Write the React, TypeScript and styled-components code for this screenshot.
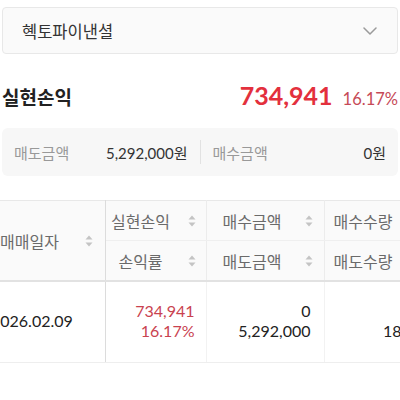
import styled, { createGlobalStyle } from 'styled-components'

const GlobalStyle = createGlobalStyle`
  html, body {
    margin: 0;
    padding: 0;
    background: #fff;
  }
  body {
    font-family: Lato, "Noto Sans CJK KR", sans-serif;
    color: #222;
  }
`

const Page = styled.div`
  width: 400px;
  padding: 7px 2px 0;
  box-sizing: border-box;
  overflow: hidden;
`

const Select = styled.div`
  display: flex;
  align-items: center;
  justify-content: space-between;
  height: 47px;
  box-sizing: border-box;
  padding: 0 20px 0 19px;
  background: #fafafa;
  border: 1px solid #e8e8e8;
  border-radius: 4px;
  font-size: 16.5px;
  color: #333;
`

const TitleRow = styled.div`
  display: flex;
  align-items: baseline;
  justify-content: space-between;
  margin-top: 26px;
  height: 36px;
`

const Title = styled.div`
  font-size: 19px;
  font-weight: 700;
  color: #222;
`

const Profit = styled.div`
  display: flex;
  align-items: baseline;
  gap: 10px;
`

const ProfitValue = styled.span`
  font-size: 25px;
  font-weight: 700;
  color: #e3303d;
`

const ProfitRate = styled.span`
  font-size: 16.5px;
  color: #c64a57;
`

const Summary = styled.div`
  display: flex;
  align-items: center;
  margin-top: 12px;
  height: 48px;
  background: #f7f7f7;
  border-radius: 6px;
`

const SummaryItem = styled.div`
  flex: 1;
  display: flex;
  justify-content: space-between;
  align-items: center;
  padding: 0 12px;
  font-size: 15px;
`

const SummaryLabel = styled.span`
  color: #999;
`

const SummaryValue = styled.span`
  color: #333;
`

const Divider = styled.div`
  width: 1px;
  height: 24px;
  background: #e2e2e2;
`

const TableWrap = styled.div`
  margin: 24px -2px 0;
  overflow: hidden;
`

const Table = styled.table`
  margin-left: -16px;
  border-collapse: collapse;
  table-layout: fixed;
  width: 440px;
`

const Th = styled.th<{ $first?: boolean; $bottom?: boolean }>`
  height: 39px;
  padding: 0;
  background: #fafafa;
  font-weight: 400;
  font-size: 16px;
  color: #6a6a6a;
  border-top: 1px solid #e8e8e8;
  border-right: 1px solid ${(p) => (p.$first ? '#dcdcdc' : '#ececec')};
  border-bottom: ${(p) => (p.$bottom ? '2px solid #e2e2e2' : '1px solid #efefef')};
`

const HeadInner = styled.div<{ $pl: number; $pr: number; $gap: number; $center?: boolean }>`
  display: flex;
  align-items: center;
  gap: ${(p) => p.$gap}px;
  padding: 0 ${(p) => p.$pr}px 0 ${(p) => p.$pl}px;

  span {
    flex: 1;
    text-align: ${(p) => (p.$center ? 'center' : 'left')};
    white-space: nowrap;
  }
`

const Td = styled.td<{ $first?: boolean; $align?: string; $pl?: number; $pr?: number; $red?: boolean }>`
  height: 78px;
  padding: 0 ${(p) => p.$pr ?? 0}px 2px ${(p) => p.$pl ?? 0}px;
  font-size: 16px;
  line-height: 20px;
  color: ${(p) => (p.$red ? '#c9424f' : '#222')};
  text-align: ${(p) => p.$align ?? 'left'};
  border-right: 1px solid ${(p) => (p.$first ? '#dcdcdc' : '#f2f2f2')};
  border-bottom: 1px solid #eeeeee;
  white-space: nowrap;
`

const Chevron = () => (
  <svg width="14" height="8" viewBox="0 0 14 8" fill="none">
    <path d="M1 1l6 6 6-6" stroke="#9a9a9a" strokeWidth="1.5" strokeLinecap="round" strokeLinejoin="round" />
  </svg>
)

const SortIcon = () => (
  <svg width="8" height="12" viewBox="0 0 8 12">
    <path d="M4 0.5L7.5 4.5H0.5Z" fill="#c4c4c4" />
    <path d="M4 11.5L7.5 7.5H0.5Z" fill="#c4c4c4" />
  </svg>
)

const HeadCell = ({
  label,
  pl,
  pr,
  gap,
  center,
  icon = true,
}: {
  label: string
  pl: number
  pr: number
  gap: number
  center?: boolean
  icon?: boolean
}) => (
  <HeadInner $pl={pl} $pr={pr} $gap={gap} $center={center}>
    <span>{label}</span>
    {icon && <SortIcon />}
  </HeadInner>
)

export default function App() {
  return (
    <>
      <GlobalStyle />
      <Page>
        <Select>
          <span>혝토파이낸셜</span>
          <Chevron />
        </Select>

        <TitleRow>
          <Title>실현손익</Title>
          <Profit>
            <ProfitValue>734,941</ProfitValue>
            <ProfitRate>16.17%</ProfitRate>
          </Profit>
        </TitleRow>

        <Summary>
          <SummaryItem>
            <SummaryLabel>매도금액</SummaryLabel>
            <SummaryValue>5,292,000원</SummaryValue>
          </SummaryItem>
          <Divider />
          <SummaryItem>
            <SummaryLabel>매수금액</SummaryLabel>
            <SummaryValue>0원</SummaryValue>
          </SummaryItem>
        </Summary>

        <TableWrap>
          <Table>
            <colgroup>
              <col style={{ width: 121 }} />
              <col style={{ width: 101 }} />
              <col style={{ width: 118 }} />
              <col style={{ width: 100 }} />
            </colgroup>
            <thead>
              <tr>
                <Th rowSpan={2} $first $bottom>
                  <HeadCell label="매매일자" pl={16} pr={12} gap={8} />
                </Th>
                <Th>
                  <HeadCell label="실현손익" pl={4} pr={10} gap={16} center />
                </Th>
                <Th>
                  <HeadCell label="매수금액" pl={16} pr={11} gap={8} />
                </Th>
                <Th>
                  <HeadCell label="매수수량" pl={9} pr={10} gap={8} icon={false} />
                </Th>
              </tr>
              <tr>
                <Th $bottom>
                  <HeadCell label="손익률" pl={4} pr={10} gap={16} center />
                </Th>
                <Th $bottom>
                  <HeadCell label="매도금액" pl={16} pr={11} gap={8} />
                </Th>
                <Th $bottom>
                  <HeadCell label="매도수량" pl={9} pr={10} gap={8} icon={false} />
                </Th>
              </tr>
            </thead>
            <tbody>
              <tr>
                <Td $first $pl={7}>
                  2026.02.09
                </Td>
                <Td $align="right" $pr={11} $red>
                  734,941
                  <br />
                  16.17%
                </Td>
                <Td $align="right" $pr={13}>
                  0
                  <br />
                  5,292,000
                </Td>
                <Td $align="right" $pr={22}>
                  &nbsp;
                  <br />
                  18
                </Td>
              </tr>
            </tbody>
          </Table>
        </TableWrap>
      </Page>
    </>
  )
}
